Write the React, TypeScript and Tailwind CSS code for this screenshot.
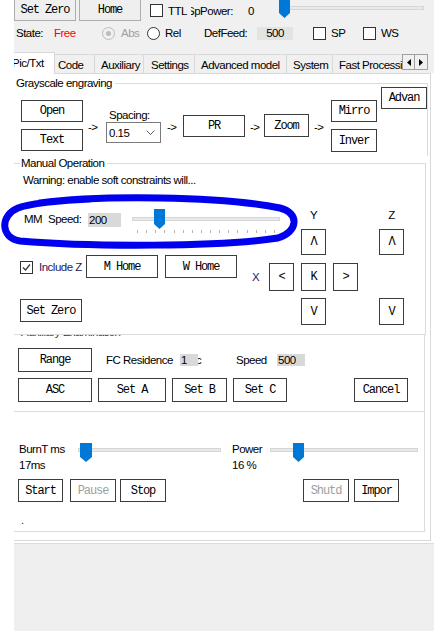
import React from 'react';

const mono = "font-['Liberation_Mono',monospace] text-[12px] tracking-[-1.1px]";

function Btn({ children, className = '', disabled = false }: { children: React.ReactNode; className?: string; disabled?: boolean }) {
    return (
        <div
            className={`flex shrink-0 items-center justify-center border border-[#3c3c3c] bg-white leading-none ${mono} ${disabled ? 'text-[#a0a0a0]' : 'text-black'} ${className}`}
        >
            {children}
        </div>
    );
}

function Check({ checked = false, className = '' }: { checked?: boolean; className?: string }) {
    return (
        <div className={`flex h-[13px] w-[13px] shrink-0 items-center justify-center border border-[#333333] bg-white ${className}`}>
            {checked && (
                <svg width="9" height="9" viewBox="0 0 9 9">
                    <polyline points="1,4.5 3.5,7 8,1.5" fill="none" stroke="#333333" strokeWidth="1.2" />
                </svg>
            )}
        </div>
    );
}

function Radio({ disabled = false, checked = false }: { disabled?: boolean; checked?: boolean }) {
    return (
        <div
            className={`flex h-[13px] w-[13px] shrink-0 items-center justify-center rounded-full border ${disabled ? 'border-[#bcbcbc] bg-[#f0f0f0]' : 'border-[#333333] bg-white'}`}
        >
            {checked && <div className={`h-[5px] w-[5px] rounded-full ${disabled ? 'bg-[#bcbcbc]' : 'bg-[#333333]'}`} />}
        </div>
    );
}

function Thumb({ w, h }: { w: number; h: number }) {
    return (
        <svg width={w} height={h} viewBox={`0 0 ${w} ${h}`}>
            <path d={`M0 0H${w}V${h - 5}L${w / 2} ${h}L0 ${h - 5}Z`} fill="#0078d7" />
        </svg>
    );
}

function Arrow({ className = '' }: { className?: string }) {
    return <span className={`w-[10px] shrink-0 whitespace-nowrap ${className}`}>-&gt;</span>;
}

const ticks = Array.from({ length: 16 });

export default function App() {
    return (
        <div className="relative flex h-[631px] w-[434px] overflow-hidden bg-white font-['Liberation_Sans',Arial,sans-serif] text-[11.5px] leading-[14px] tracking-[-0.5px] text-black">
            <div className="w-[14px] shrink-0 bg-white" />
            <div className="flex w-[420px] flex-col overflow-hidden bg-[#f0f0f0]">
                {/* top row */}
                <div className="flex h-[21px] shrink-0 items-center">
                    <div className={`flex h-[21px] w-[62px] items-center justify-center border-x border-b border-[#adadad] bg-[#efefef] ${mono}`}>Set Zero</div>
                    <div className={`ml-[3px] flex h-[21px] w-[62px] items-center justify-center border-x border-b border-[#adadad] bg-[#efefef] ${mono}`}>Home</div>
                    <Check className="ml-[9px]" />
                    <span className="ml-[5px] w-[23px]">TTL</span>
                    <span className="w-[57px] overflow-hidden whitespace-nowrap">
                        <span className="-ml-[4px] inline-block">SpPower:</span>
                    </span>
                    <span className="w-[31px]">0</span>
                    <div className="relative h-[21px] w-[145px]">
                        <div className="absolute left-[4px] right-0 top-[6px] h-[4px] border border-[#d6d6d6] bg-[#e7eaea]" />
                        <div className="absolute -top-[3px] left-0">
                            <Thumb w={11} h={21} />
                        </div>
                    </div>
                </div>

                {/* state row */}
                <div className="mt-[3px] flex h-[18px] shrink-0 items-center">
                    <span className="ml-[2px] w-[38px]">State:</span>
                    <span className="w-[48px] text-[#ff0000]">Free</span>
                    <Radio disabled checked />
                    <span className="ml-[6px] w-[26px] text-[#a0a0a0]">Abs</span>
                    <Radio />
                    <span className="ml-[5px] w-[39px]">Rel</span>
                    <span className="w-[53px]">DefFeed:</span>
                    <div className="flex h-[13px] w-[36px] items-center justify-center bg-[#e3e3e3]">500</div>
                    <Check className="ml-[20px]" />
                    <span className="ml-[5px] w-[32px]">SP</span>
                    <Check />
                    <span className="ml-[5px]">WS</span>
                </div>

                {/* tabs */}
                <div className="mt-[10px] flex h-[21px] shrink-0 items-end">
                    <div className="relative z-10 -mb-px h-[22px] w-[41px] overflow-hidden whitespace-nowrap border-r border-t border-[#d9d9d9] bg-white pt-[3px]">
                        <span className="-ml-[2px] inline-block">Pic/Txt</span>
                    </div>
                    <div className="h-[19px] w-[40px] border-r border-t border-[#d9d9d9] pl-[3px] pt-[3px]">Code</div>
                    <div className="h-[19px] w-[49px] border-r border-t border-[#d9d9d9] pl-[6px] pt-[3px]">Auxiliary</div>
                    <div className="h-[19px] w-[51px] border-r border-t border-[#d9d9d9] pl-[7px] pt-[3px]">Settings</div>
                    <div className="h-[19px] w-[92px] whitespace-nowrap border-r border-t border-[#d9d9d9] pl-[6px] pt-[3px]">Advanced model</div>
                    <div className="h-[19px] w-[46px] border-r border-t border-[#d9d9d9] pl-[6px] pt-[3px]">System</div>
                    <div className="h-[19px] w-[69px] overflow-hidden whitespace-nowrap border-t border-[#d9d9d9] pl-[6px] pt-[3px]">Fast Processing</div>
                    <div className="mb-[3px] flex self-end">
                        <div className="flex h-[16px] w-[13px] items-center justify-center border border-[#a0a0a0] bg-[#f0f0f0]">
                            <svg width="4" height="7" viewBox="0 0 4 7">
                                <path d="M4 0V7L0 3.5Z" fill="#000" />
                            </svg>
                        </div>
                        <div className="flex h-[16px] w-[13px] items-center justify-center border border-l-0 border-[#a0a0a0] bg-[#f0f0f0]">
                            <svg width="4" height="7" viewBox="0 0 4 7">
                                <path d="M0 0V7L4 3.5Z" fill="#000" />
                            </svg>
                        </div>
                    </div>
                </div>

                {/* tab page */}
                <div className="flex shrink-0">
                    <div className="flex h-[468px] w-[417px] flex-col border-b border-r border-t border-[#d9d9d9] bg-white">
                        {/* Grayscale engraving */}
                        <div className="mt-[2px] w-[414px]">
                            <div className="flex h-[14px]">
                                <span className="ml-[2px] whitespace-nowrap">Grayscale engraving</span>
                                <div className="ml-[3px] h-[7px] flex-1 self-end border-r border-t border-[#dcdcdc]" />
                            </div>
                            <div className="flex h-[66px] items-start border-r border-[#dcdcdc]">
                                <div className="ml-[7px] mt-[10px] flex flex-col gap-[7px]">
                                    <Btn className="h-[22px] w-[62px]">Open</Btn>
                                    <Btn className="h-[22px] w-[62px]">Text</Btn>
                                </div>
                                <Arrow className="ml-[5px] mt-[30px]" />
                                <div className="ml-[8px] mt-[18px] flex flex-col">
                                    <span className="h-[14px] pl-[3px]">Spacing:</span>
                                    <div className="flex h-[21px] w-[55px] items-center border border-[#7a7a7a] bg-white pl-[2px]">
                                        <span>0.15</span>
                                        <svg className="ml-auto mr-[5px]" width="9" height="5" viewBox="0 0 9 5">
                                            <polyline points="0.5,0.5 4.5,4.5 8.5,0.5" fill="none" stroke="#606060" strokeWidth="1" />
                                        </svg>
                                    </div>
                                </div>
                                <Arrow className="ml-[6px] mt-[30px]" />
                                <Btn className="ml-[6px] mt-[25px] h-[22px] w-[62px]">PR</Btn>
                                <Arrow className="ml-[5px] mt-[30px]" />
                                <Btn className="ml-[4px] mt-[24px] h-[23px] w-[45px]">Zoom</Btn>
                                <Arrow className="ml-[5px] mt-[30px]" />
                                <div className="ml-[7px] mt-[10px] flex flex-col gap-[7px]">
                                    <Btn className="h-[22px] w-[46px]">Mirro</Btn>
                                    <Btn className="h-[23px] w-[46px]">Inver</Btn>
                                </div>
                                <Btn className="ml-[4px] -mt-[3px] h-[22px] w-[46px]">Advan</Btn>
                            </div>
                        </div>

                        {/* Manual Operation */}
                        <div className="w-[412px]">
                            <div className="flex h-[14px]">
                                <div className="h-[7px] w-[6px] self-end border-t border-[#dcdcdc]" />
                                <span className="ml-[1px] whitespace-nowrap">Manual Operation</span>
                                <div className="ml-[3px] h-[7px] flex-1 self-end border-r border-t border-[#dcdcdc]" />
                            </div>
                            <div className="flex h-[165px] flex-col border-b border-r border-[#dcdcdc]">
                                <div className="ml-[9px] mt-[3px] h-[14px] whitespace-nowrap">Warning: enable soft constraints will...</div>

                                {/* speed row */}
                                <div className="mt-[13px] flex h-[55px] items-start">
                                    <span className="ml-[10px] mt-[12px] w-[24px]">MM</span>
                                    <span className="mt-[12px] w-[40px]">Speed:</span>
                                    <div className="mt-[13px] h-[14px] w-[33px] bg-[#d9d9d9] pl-[1px]">200</div>
                                    <div className="relative ml-[11px] mt-[9px] h-[26px] w-[148px]">
                                        <div className="absolute left-0 right-0 top-[8px] h-[4px] border border-[#d6d6d6] bg-[#e7eaea]" />
                                        <div className="absolute left-[22px] top-0">
                                            <Thumb w={11} h={20} />
                                        </div>
                                        <div className="absolute left-[5px] right-[5px] top-[21px] flex justify-between">
                                            {ticks.map((_, i) => (
                                                <div key={i} className="h-[3px] w-px bg-[#b4b4b4]" />
                                            ))}
                                        </div>
                                    </div>
                                    <div className="ml-[21px] mt-[8px] flex w-[25px] flex-col items-center">
                                        <span className="h-[14px]">Y</span>
                                        <Btn className="mt-[7px] h-[26px] w-[25px]">Λ</Btn>
                                    </div>
                                    <div className="ml-[53px] mt-[8px] flex w-[25px] flex-col items-center">
                                        <span className="h-[14px]">Z</span>
                                        <Btn className="mt-[7px] h-[26px] w-[25px]">Λ</Btn>
                                    </div>
                                </div>

                                {/* home row */}
                                <div className="flex h-[36px] items-start">
                                    <Check checked className="ml-[6px] mt-[6px]" />
                                    <span className="ml-[6px] mt-[5px] w-[47px] whitespace-nowrap text-[#1e2060]">Include Z</span>
                                    <Btn className="h-[23px] w-[72px]">M Home</Btn>
                                    <Btn className="ml-[7px] h-[23px] w-[72px]">W Home</Btn>
                                    <span className="ml-[15px] mt-[15px] w-[17px] text-[#1e2060]">X</span>
                                    <Btn className="mt-[8px] h-[28px] w-[25px]">&lt;</Btn>
                                    <Btn className="ml-[7px] mt-[8px] h-[28px] w-[25px]">K</Btn>
                                    <Btn className="ml-[7px] mt-[8px] h-[28px] w-[25px]">&gt;</Btn>
                                </div>

                                {/* zero row */}
                                <div className="flex h-[34px] items-start">
                                    <Btn className="ml-[6px] mt-[8px] h-[23px] w-[62px]">Set Zero</Btn>
                                    <Btn className="ml-[219px] mt-[7px] h-[27px] w-[25px]">V</Btn>
                                    <Btn className="ml-[53px] mt-[7px] h-[27px] w-[25px]">V</Btn>
                                </div>
                            </div>
                        </div>

                        {/* Auxiliary Examination */}
                        <div className="flex w-[411px] flex-col border-b border-r border-[#dcdcdc]">
                            <div className="h-[4px] overflow-hidden">
                                <div className="-mt-[10px] ml-[7px] whitespace-nowrap text-[#333333]">Auxiliary Examination</div>
                            </div>
                            <div className="mt-[9px] flex h-[24px] items-center">
                                <Btn className="ml-[4px] h-[24px] w-[74px]">Range</Btn>
                                <span className="ml-[14px] w-[74px] whitespace-nowrap">FC Residence</span>
                                <div className="h-[12px] w-[18px] bg-[#d9d9d9] pl-[1px] leading-[12px]">1</div>
                                <span className="w-[38px] overflow-hidden">
                                    <span className="-ml-[2px] inline-block">c</span>
                                </span>
                                <span className="w-[41px]">Speed</span>
                                <div className="h-[12px] w-[28px] bg-[#d9d9d9] pl-[1px] leading-[12px]">500</div>
                            </div>
                            <div className="mb-[9px] mt-[6px] flex h-[24px] items-center">
                                <Btn className="ml-[4px] h-[24px] w-[74px]">ASC</Btn>
                                <Btn className="ml-[6px] h-[24px] w-[68px]">Set A</Btn>
                                <Btn className="ml-[6px] h-[24px] w-[55px]">Set B</Btn>
                                <Btn className="ml-[6px] h-[24px] w-[54px]">Set C</Btn>
                                <Btn className="ml-[67px] h-[24px] w-[54px]">Cancel</Btn>
                            </div>
                        </div>

                        {/* burn */}
                        <div className="flex h-[120px] w-[411px] flex-col border-b border-r border-[#dcdcdc] pt-[30px]">
                            <div className="flex h-[30px] items-start">
                                <div className="ml-[5px] flex w-[59px] flex-col">
                                    <span className="h-[14px] whitespace-nowrap">BurnT ms</span>
                                    <span className="mt-[2px] h-[14px]">17ms</span>
                                </div>
                                <div className="relative mt-[1px] h-[20px] w-[143px]">
                                    <div className="absolute left-0 right-0 top-[5px] h-[4px] border border-[#d6d6d6] bg-[#e7eaea]" />
                                    <div className="absolute left-[2px] top-0">
                                        <Thumb w={12} h={19} />
                                    </div>
                                </div>
                                <div className="ml-[11px] flex w-[38px] flex-col">
                                    <span className="h-[14px]">Power</span>
                                    <span className="mt-[2px] h-[14px]">16 %</span>
                                </div>
                                <div className="relative mt-[1px] h-[20px] w-[148px]">
                                    <div className="absolute left-0 right-0 top-[5px] h-[4px] border border-[#d6d6d6] bg-[#e7eaea]" />
                                    <div className="absolute left-[23px] top-0">
                                        <Thumb w={11} h={19} />
                                    </div>
                                </div>
                            </div>
                            <div className="mt-[7px] flex h-[23px] items-center">
                                <Btn className="ml-[4px] h-[23px] w-[45px]">Start</Btn>
                                <Btn disabled className="ml-[7px] h-[23px] w-[46px]">Pause</Btn>
                                <Btn className="ml-[4px] h-[23px] w-[46px]">Stop</Btn>
                                <Btn disabled className="ml-[137px] h-[23px] w-[46px]">Shutd</Btn>
                                <Btn className="ml-[5px] h-[23px] w-[45px]">Impor</Btn>
                            </div>
                            <span className="ml-[7px] mt-[11px] h-[14px] text-[#5a1010]">.</span>
                        </div>
                    </div>
                    <div className="w-[3px] bg-white" />
                </div>
                <div className="h-[2px] shrink-0 bg-white" />
                <div className="flex-1 border-t border-[#dcdcdc] bg-[#efefef]" />
            </div>

            {/* hand-drawn annotation */}
            <svg className="pointer-events-none absolute left-0 top-0" width="434" height="631" viewBox="0 0 434 631">
                <path
                    d="M 40 203 C 100 195, 220 196, 280 208 C 300 213, 298 232, 278 238 C 220 247, 90 247, 20 241 C 0 238, 0 215, 18 208 C 28 204, 60 200, 90 199"
                    fill="none"
                    stroke="#0000ee"
                    strokeWidth="7"
                    strokeLinecap="round"
                    strokeLinejoin="round"
                />
            </svg>
        </div>
    );
}
